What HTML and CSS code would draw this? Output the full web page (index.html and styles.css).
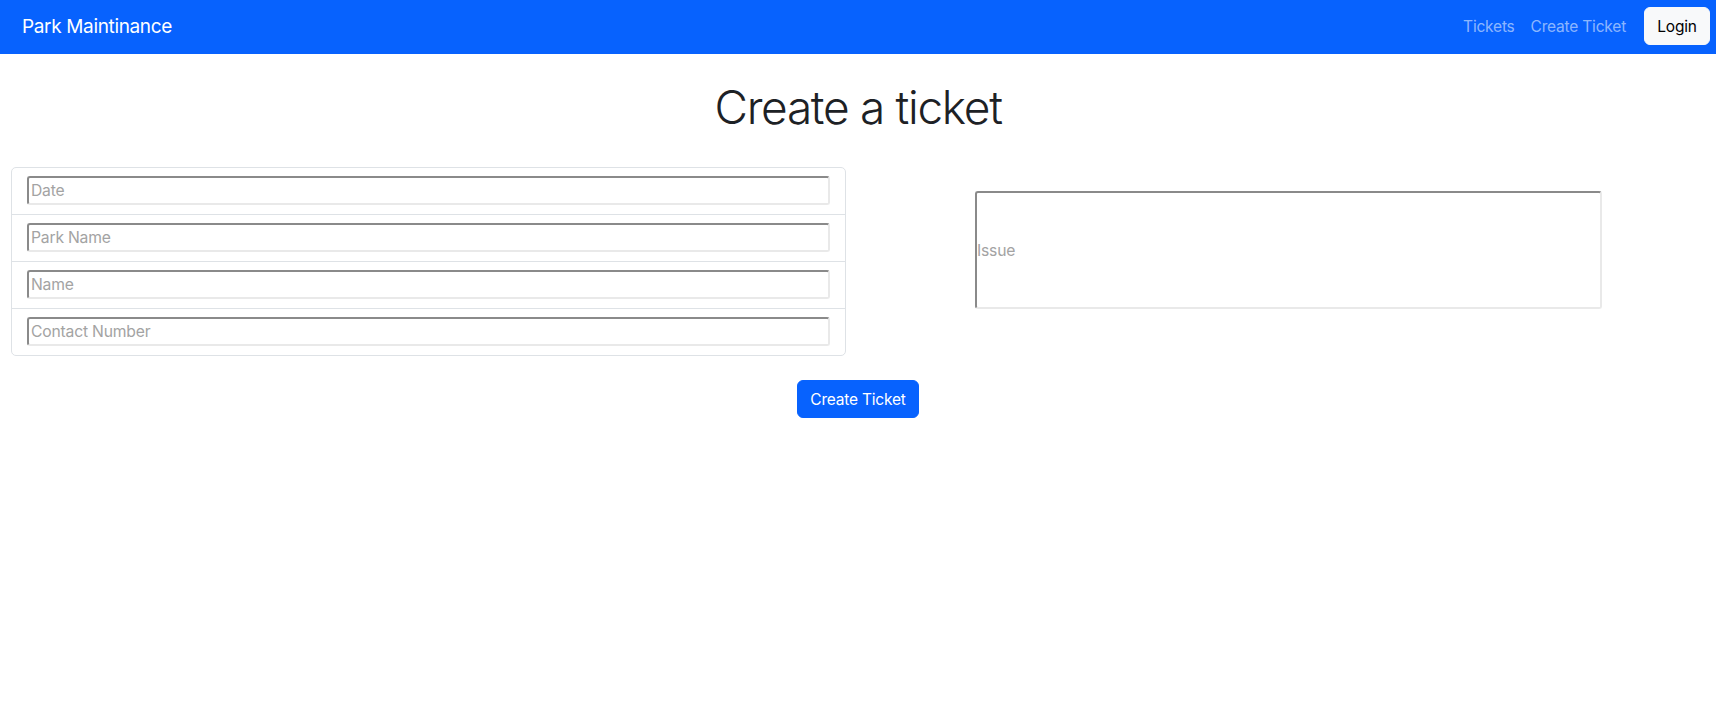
FILE: index.html
```html
<!DOCTYPE html>
<html lang="en">
<head>
<meta charset="utf-8">
<title>Park Maintinance</title>
<link rel="stylesheet" href="styles.css">
</head>
<body>
<nav class="navbar">
  <a class="brand" href="#">Park Maintinance</a>
  <div class="nav-right">
    <a class="nav-link" href="#">Tickets</a>
    <a class="nav-link" href="#">Create Ticket</a>
    <button class="btn-light" type="button">Login</button>
  </div>
</nav>
<main class="page">
  <h1 class="title">Create a ticket</h1>
  <form class="ticket-form">
    <div class="row">
      <div class="col">
        <ul class="list-group">
          <li class="list-item"><input class="field" type="text" placeholder="Date"></li>
          <li class="list-item"><input class="field" type="text" placeholder="Park Name"></li>
          <li class="list-item"><input class="field" type="text" placeholder="Name"></li>
          <li class="list-item"><input class="field" type="text" placeholder="Contact Number"></li>
        </ul>
      </div>
      <div class="col col-issue">
        <input class="field issue" type="text" placeholder="Issue">
      </div>
    </div>
    <div class="actions">
      <button class="btn-primary" type="submit">Create Ticket</button>
    </div>
  </form>
</main>
</body>
</html>
```
FILE: styles.css
```css
* { box-sizing: border-box; }
html, body { margin: 0; padding: 0; }
body {
  font-family: Inter, "Noto Sans", "Liberation Sans", sans-serif;
  font-size: 16px;
  color: #212529;
  background: #fff;
}
.navbar {
  height: 54px;
  background: #0762fe;
  display: flex;
  align-items: center;
  justify-content: space-between;
  padding: 0 6px 2px 22px;
}
.brand {
  color: #fff;
  text-decoration: none;
  font-size: 19px;
  letter-spacing: -0.35px;
}
.nav-right {
  display: flex;
  align-items: center;
}
.nav-link {
  color: rgba(255, 255, 255, 0.55);
  text-decoration: none;
  font-size: 15.5px;
  letter-spacing: -0.2px;
  margin-right: 16px;
}
.btn-light {
  font: inherit;
  font-size: 15.5px;
  letter-spacing: -0.2px;
  background: #f8f9fa;
  border: 1px solid #f8f9fa;
  color: #000;
  border-radius: 6px;
  height: 38px;
  width: 66px;
  padding: 0;
  margin-left: 2px;
}
.page { padding: 0; }
.title {
  margin: 25px 0 0;
  text-align: center;
  font-weight: 300;
  font-size: 46px;
  line-height: 56px;
  letter-spacing: -1.3px;
  color: #1d2125;
}
.row {
  display: grid;
  grid-template-columns: 1fr 1fr;
  margin-top: 32px;
}
.col { padding: 0 12px 0 11px; }
.col-issue {
  display: flex;
  justify-content: center;
  padding: 24px 12px 0 15px;
}
.list-group {
  list-style: none;
  margin: 0;
  padding: 0;
  border: 1px solid #dee2e6;
  border-radius: 5px;
}
.list-item {
  height: 47px;
  padding: 8px 15px 0;
  border-top: 1px solid #dee2e6;
}
.list-item:first-child { border-top: 0; height: 46px; }
.field {
  display: block;
  width: 100%;
  height: 29px;
  font: inherit;
  font-size: 15.7px;
  letter-spacing: -0.2px;
  padding: 0 0 0 2px;
  color: #212529;
  background: #fff;
  border: 2px solid;
  border-color: #8a8a8a #e9e9e9 #e9e9e9 #8a8a8a;
  border-radius: 3px;
  outline: none;
}
.field::placeholder { color: #a3a3a3; }
.issue {
  width: 627px;
  height: 118px;
  padding-left: 0;
}
.actions {
  display: flex;
  justify-content: center;
  margin-top: 24px;
}
.btn-primary {
  font: inherit;
  font-size: 15.5px;
  letter-spacing: -0.2px;
  color: #fff;
  background: #0762fe;
  border: 1px solid #0762fe;
  border-radius: 6px;
  height: 38px;
  width: 122px;
  padding: 0;
}
```
